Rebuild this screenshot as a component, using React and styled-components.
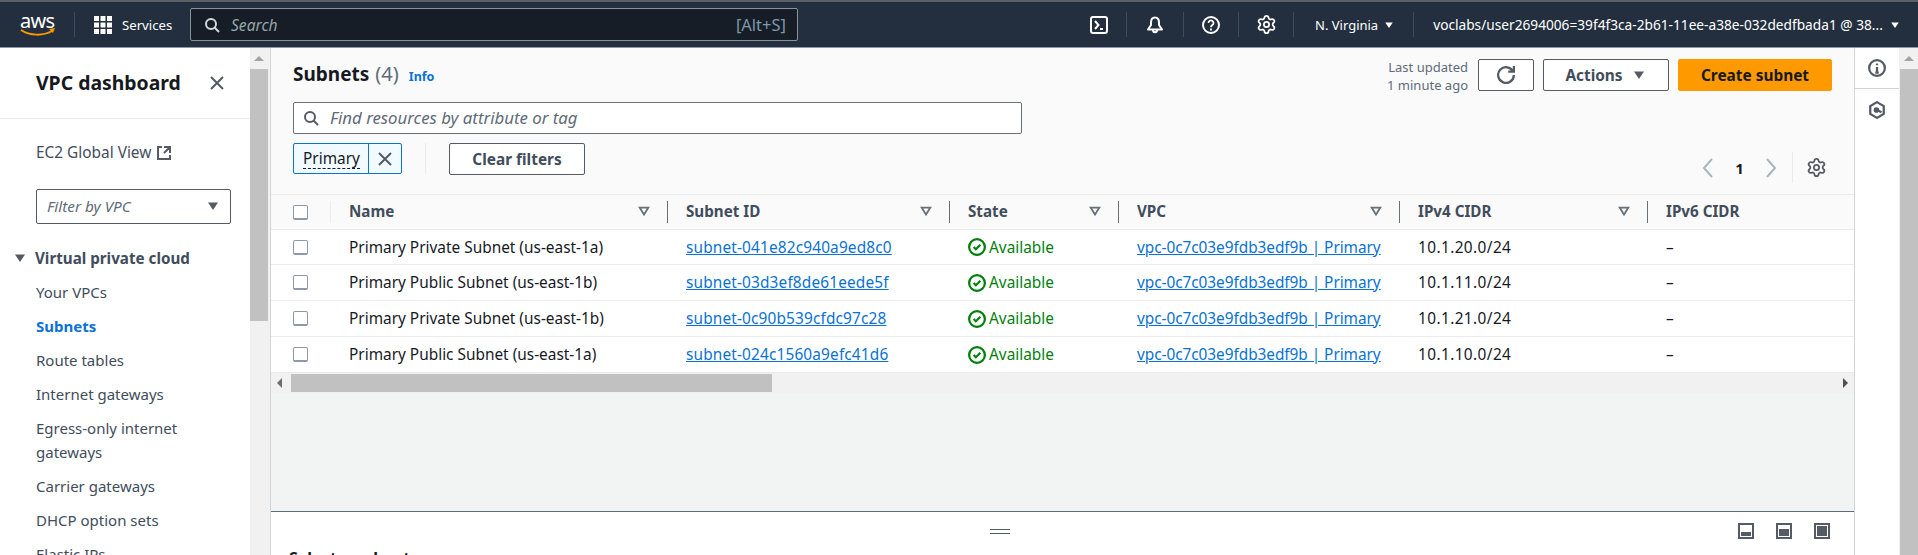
import styled, { createGlobalStyle } from 'styled-components';
import { Settings } from 'lucide-react';

const GlobalStyle = createGlobalStyle`
  html, body {
    margin: 0;
    padding: 0;
    background: #fff;
  }
  * {
    box-sizing: border-box;
  }
`;

const Page = styled.div`
  width: 1918px;
  height: 555px;
  display: flex;
  flex-direction: column;
  overflow: hidden;
  font-family: "Noto Sans", "Liberation Sans", sans-serif;
  font-size: 15.4px;
  color: #16191f;
`;

const TopBar = styled.header`
  height: 48px;
  flex: none;
  display: flex;
  align-items: center;
  background: #232f3e;
  border-top: 2px solid #5a5f66;
  border-bottom: 1px solid #8d99a8;
  color: #fff;
`;

const Logo = styled.svg`
  flex: none;
  margin-left: 20px;
  width: 36px;
  height: 24px;
  overflow: visible;
`;

const NavDivider = styled.span`
  flex: none;
  width: 1px;
  height: 25px;
  background: #414d5c;
  margin-left: ${({ $left }) => $left}px;
`;

const Services = styled.span`
  flex: none;
  width: 49px;
  margin-left: 10px;
  font-size: 13.2px;
  white-space: nowrap;
`;

const GridIcon = styled.svg`
  flex: none;
  width: 18px;
  height: 18px;
  margin-left: 19px;
  fill: #fff;
`;

const SearchBox = styled.div`
  flex: none;
  width: 608px;
  height: 33px;
  margin-left: 19px;
  display: flex;
  align-items: center;
  justify-content: space-between;
  padding: 0 11px 0 13px;
  background: #161d26;
  border: 1px solid #879596;
  border-radius: 2px;
`;

const SearchLabel = styled.span`
  display: flex;
  align-items: center;
  gap: 11px;
  font-size: 15.6px;
  font-style: italic;
  color: #95a5a6;
`;

const Shortcut = styled.span`
  color: #7d98ab;
  font-size: 16.5px;
`;

const NavIcon = styled.svg`
  flex: none;
  width: 18px;
  height: 18px;
  margin-left: ${({ $left }) => $left}px;
  fill: none;
  stroke: #fff;
  stroke-width: 2;
`;

const NavGear = styled(Settings)`
  flex: none;
  margin-left: 17px;
  color: #fff;
`;

const NavText = styled.span`
  flex: none;
  font-size: ${({ $size }) => $size}px;
  white-space: nowrap;
  margin-left: ${({ $left }) => $left}px;
`;

const Caret = styled.svg`
  flex: none;
  width: ${({ $size }) => $size || 16}px;
  height: ${({ $size }) => $size || 16}px;
  margin-left: ${({ $left }) => $left || 0}px;
  fill: ${({ $color }) => $color || '#545b64'};
`;

const Body = styled.div`
  flex: 1;
  min-height: 0;
  display: flex;
`;

const Sidebar = styled.aside`
  width: 250px;
  flex: none;
  overflow: hidden;
  background: #fff;
  color: #414d5c;
`;

const SidebarHead = styled.div`
  height: 71px;
  display: flex;
  align-items: center;
  justify-content: space-between;
  padding: 0 25px 1px 36px;
  border-bottom: 1px solid #e9ebed;
`;

const SidebarTitle = styled.h2`
  margin: 0;
  font-size: 19.4px;
  font-weight: 700;
  color: #16191f;
`;

const PlainIcon = styled.svg`
  flex: none;
  width: ${({ $size }) => $size || 16}px;
  height: ${({ $size }) => $size || 16}px;
  fill: none;
  stroke: ${({ $color }) => $color || '#545b64'};
  stroke-width: 2;
`;

const GlobalLink = styled.div`
  display: flex;
  align-items: center;
  gap: 5px;
  padding: 23px 0 0 36px;
  line-height: 22px;
`;

const VpcFilter = styled.div`
  width: 195px;
  height: 35px;
  margin: 25px 0 0 36px;
  display: flex;
  align-items: center;
  justify-content: space-between;
  padding: 0 9px 2px 10px;
  border: 1px solid #545b64;
  border-radius: 2px;
  font-size: 15.3px;
  font-style: italic;
  color: #5f6b7a;
`;

const NavGroup = styled.div`
  display: flex;
  align-items: center;
  gap: 7px;
  margin: 23px 0 0 12px;
  line-height: 22px;
  font-size: 15.2px;
  font-weight: 700;
`;

const NavList = styled.ul`
  list-style: none;
  margin: 5px 0 0;
  padding: 0 30px 0 36px;
`;

const NavItem = styled.li`
  padding: 6px 0;
  line-height: 24px;
  margin-bottom: -2px;
  font-size: 15px;
  color: ${({ $active }) => ($active ? '#0972d3' : '#414d5c')};
  font-weight: ${({ $active }) => ($active ? 700 : 400)};
`;

const VScroll = styled.div`
  width: ${({ $wide }) => ($wide ? 19 : 20)}px;
  flex: none;
  display: flex;
  flex-direction: column;
  align-items: ${({ $wide }) => ($wide ? 'flex-end' : 'flex-start')};
  background: #f1f1f1;
`;

const ScrollUp = styled.div`
  width: 18px;
  height: 21px;
  display: flex;
  align-items: center;
  justify-content: center;
  &::before {
    content: '';
    border-left: 5px solid transparent;
    border-right: 5px solid transparent;
    border-bottom: 5px solid #a3a3a3;
  }
`;

const ScrollThumb = styled.div`
  width: 18px;
  height: ${({ $height }) => $height}px;
  background: #c1c1c1;
`;

const Main = styled.main`
  flex: 1;
  min-width: 0;
  display: flex;
  flex-direction: column;
  border-left: 1px solid #d1d5db;
`;

const ListHeader = styled.section`
  flex: none;
  height: 146px;
  padding: 11px 22px 0 22px;
  background: #fafafa;
`;

const TitleRow = styled.div`
  height: 32px;
  display: flex;
  align-items: center;
  justify-content: space-between;
`;

const Title = styled.h1`
  margin: 0 0 4px;
  display: flex;
  align-items: baseline;
  font-size: 19px;
  font-weight: 700;
`;

const Count = styled.span`
  margin-left: 6px;
  font-size: 20px;
  font-weight: 400;
  color: #5f6b7a;
`;

const InfoLink = styled.a`
  margin-left: 10px;
  font-size: 12.5px;
  font-weight: 700;
  color: #0972d3;
`;

const Actions = styled.div`
  display: flex;
  align-items: center;
`;

const Updated = styled.div`
  text-align: right;
  font-size: 13px;
  line-height: 18px;
  color: #5f6b7a;
  margin: 1px 10px 0 0;
`;

const Button = styled.button`
  height: 32px;
  width: ${({ $width }) => $width}px;
  margin-left: ${({ $left }) => $left || 0}px;
  display: inline-flex;
  align-items: center;
  justify-content: center;
  gap: 8px;
  padding: 0;
  font: inherit;
  font-weight: 700;
  color: ${({ $primary }) => ($primary ? '#16191f' : '#414d5c')};
  background: ${({ $primary }) => ($primary ? '#ff9900' : '#fff')};
  border: 1px solid ${({ $primary }) => ($primary ? '#ff9900' : '#545b64')};
  border-radius: 2px;
`;

const FindInput = styled.div`
  width: 729px;
  height: 32px;
  margin-top: 11px;
  display: flex;
  align-items: center;
  gap: 11px;
  padding: 0 0 1px 9px;
  background: #fff;
  border: 1px solid #687078;
  border-radius: 2px;
  font-size: 16.8px;
  font-style: italic;
  color: #5f6b7a;
`;

const FilterRow = styled.div`
  height: 31px;
  margin-top: 9px;
  display: flex;
  align-items: stretch;
`;

const Token = styled.div`
  width: 109px;
  display: flex;
  background: #f1faff;
  border: 1px solid #0972d3;
  border-radius: 2px;
`;

const TokenLabel = styled.span`
  width: 75px;
  display: flex;
  align-items: center;
  padding-left: 9px;
  border-right: 1px solid #0972d3;
`;

const Dashed = styled.span`
  border-bottom: 1px dashed #16191f;
  line-height: 19px;
`;

const TokenClose = styled.span`
  flex: 1;
  display: flex;
  align-items: center;
  justify-content: center;
`;

const FilterDivider = styled.span`
  width: 1px;
  margin: 0 23px;
  background: #e9ebed;
`;

const Pager = styled.div`
  margin: 9px 0 0 auto;
  height: 31px;
  display: flex;
  align-items: center;
  padding-right: 5px;
  font-weight: 700;
`;

const PagerNumber = styled.span`
  width: 49px;
  text-align: center;
  font-size: 15px;
  color: #16191f;
`;

const PagerDivider = styled.span`
  width: 1px;
  height: 31px;
  margin: 0 13px 0 14px;
  background: #e9ebed;
`;

const ChevronIcon = styled.svg`
  flex: none;
  width: 14px;
  height: 20px;
  fill: none;
  stroke: #aab7b8;
  stroke-width: 2;
`;

const columns = '59px 337px 282px 169px 281px 248px 1fr';

const TableHead = styled.div`
  flex: none;
  display: grid;
  grid-template-columns: ${columns};
  height: 36px;
  align-items: center;
  background: #fafafa;
  border-top: 1px solid #e9ebed;
  border-bottom: 1px solid #e9ebed;
`;

const HeadCell = styled.div`
  height: 22px;
  display: flex;
  align-items: center;
  justify-content: space-between;
  padding: 0 16px 2px 18px;
  border-left: 1px solid ${({ $light }) => ($light ? '#e9ebed' : '#687078')};
  font-size: 15.2px;
  font-weight: 700;
  color: #414d5c;
`;

const CheckCell = styled.div`
  display: flex;
  align-items: center;
  padding-left: 22px;
`;

const CheckBox = styled.span`
  width: 15px;
  height: 15px;
  background: #fff;
  border: 1px solid #8d99a8;
  border-bottom-width: 2px;
  border-radius: 2px;
`;

const FilterIcon = styled.svg`
  flex: none;
  width: 14px;
  height: 14px;
  fill: none;
  stroke: #687078;
  stroke-width: 2;
`;

const Row = styled.div`
  flex: none;
  display: grid;
  grid-template-columns: ${columns};
  height: ${({ $height }) => $height}px;
  align-items: center;
  background: #fff;
  border-bottom: 1px solid #e9ebed;
`;

const Cell = styled.div`
  display: flex;
  align-items: center;
  padding-left: 19px;
  white-space: nowrap;
  letter-spacing: ${({ $spacing }) => $spacing || 0}px;
`;

const IdLink = styled.a`
  color: #0972d3;
  text-decoration: underline;
  letter-spacing: ${({ $spacing }) => $spacing}px;
`;

const Status = styled.span`
  display: flex;
  align-items: center;
  gap: 3px;
  color: #037f0c;
`;

const HScroll = styled.div`
  flex: none;
  height: 20px;
  display: flex;
  align-items: center;
  background: #f1f1f1;
  padding: 0 6px;
`;

const HThumb = styled.div`
  width: 481px;
  height: 18px;
  margin-left: 9px;
  background: #c1c1c1;
`;

const ArrowLeft = styled.span`
  border-top: 5px solid transparent;
  border-bottom: 5px solid transparent;
  border-right: 5px solid #6d6d6d;
`;

const ArrowRight = styled.span`
  margin-left: auto;
  border-top: 5px solid transparent;
  border-bottom: 5px solid transparent;
  border-left: 5px solid #505050;
`;

const EmptyArea = styled.div`
  flex: 1;
  background: #f2f3f3;
  border-bottom: 1px solid #5f6b7a;
`;

const SplitPanel = styled.section`
  flex: none;
  height: 43px;
  overflow: hidden;
  background: #fff;
`;

const SplitTools = styled.div`
  height: 38px;
  display: flex;
  align-items: center;
  padding: 0 24px 0 719px;
`;

const DragHandle = styled.span`
  width: 20px;
  height: 5px;
  border-top: 1px solid #545b64;
  border-bottom: 1px solid #545b64;
`;

const PanelIcons = styled.div`
  margin-left: auto;
  display: flex;
  gap: 22px;
`;

const PanelIcon = styled.svg`
  width: 16px;
  height: 16px;
  fill: #545b64;
`;

const SplitTitle = styled.h3`
  margin: 0;
  padding-left: 18px;
  font-size: 16px;
  line-height: 16px;
  font-weight: 700;
`;

const RightRail = styled.aside`
  width: 45px;
  flex: none;
  background: #fff;
  border-left: 1px solid #d1d5db;
`;

const RailButton = styled.div`
  height: ${({ $height }) => $height}px;
  display: flex;
  align-items: ${({ $top }) => ($top ? 'flex-start' : 'center')};
  justify-content: center;
  padding-top: ${({ $top }) => $top || 0}px;
  border-bottom: ${({ $line }) => ($line ? '1px solid #d1d5db' : 'none')};
`;

const GearIcon = styled(Settings)`
  flex: none;
  color: #545b64;
`;

const CaretIcon = (props) => (
  <Caret viewBox="0 0 16 16" {...props}>
    <path d="M3 4.5h10L8 12z" />
  </Caret>
);

const SearchIcon = ({ color }) => (
  <PlainIcon viewBox="0 0 16 16" $color={color}>
    <circle cx="7" cy="7" r="5" />
    <path d="M10.5 10.5 15 15" />
  </PlainIcon>
);

const CloseIcon = ({ size }) => (
  <PlainIcon viewBox="0 0 16 16" $size={size}>
    <path d="M2 2l12 12M14 2 2 14" />
  </PlainIcon>
);

const headers = [
  { label: 'Name', filter: true },
  { label: 'Subnet ID', filter: true },
  { label: 'State', filter: true },
  { label: 'VPC', filter: true },
  { label: 'IPv4 CIDR', filter: true },
  { label: 'IPv6 CIDR', filter: false }
];

const subnets = [
  { name: 'Primary Private Subnet (us-east-1a)', id: 'subnet-041e82c940a9ed8c0', cidr: '10.1.20.0/24' },
  { name: 'Primary Public Subnet (us-east-1b)', id: 'subnet-03d3ef8de61eede5f', cidr: '10.1.11.0/24' },
  { name: 'Primary Private Subnet (us-east-1b)', id: 'subnet-0c90b539cfdc97c28', cidr: '10.1.21.0/24' },
  { name: 'Primary Public Subnet (us-east-1a)', id: 'subnet-024c1560a9efc41d6', cidr: '10.1.10.0/24' }
];

const navItems = [
  { label: 'Your VPCs' },
  { label: 'Subnets', active: true },
  { label: 'Route tables' },
  { label: 'Internet gateways' },
  { label: 'Egress-only internet gateways' },
  { label: 'Carrier gateways' },
  { label: 'DHCP option sets' },
  { label: 'Elastic IPs' }
];

const App = () => (
  <Page>
    <GlobalStyle />
    <TopBar>
      <Logo viewBox="0 0 36 24">
        <text x="0" y="15" fontSize="20" fill="#fff" fontFamily="Noto Sans, sans-serif" textLength="35">aws</text>
        <path d="M1 17c9 6 22 6 31 1" fill="none" stroke="#ff9900" strokeWidth="2" />
        <path d="M29 16l6-1-2 5" fill="#ff9900" />
      </Logo>
      <NavDivider $left={18} />
      <GridIcon viewBox="0 0 18 18">
        {[0, 6.5, 13].map((y) =>
          [0, 6.5, 13].map((x) => <rect key={`${x}-${y}`} x={x} y={y} width="5" height="5" />)
        )}
      </GridIcon>
      <Services>Services</Services>
      <SearchBox>
        <SearchLabel>
          <SearchIcon color="#d5dbdb" />
          Search
        </SearchLabel>
        <Shortcut>[Alt+S]</Shortcut>
      </SearchBox>
      <NavIcon viewBox="0 0 18 18" $left={292}>
        <rect x="1" y="1" width="16" height="16" rx="2" />
        <path d="M5 5l3.5 4L5 13M10 13h3" />
      </NavIcon>
      <NavDivider $left={18} />
      <NavIcon viewBox="0 0 18 18" $left={19}>
        <path d="M9 1.5c-2.800 0-4 2.200-4 5v2.500L2 13.500h14L13 9V6.500c0-2.800-1.200-5-4-5z" strokeLinejoin="round" />
        <path d="M7 14c0 3 4 3 4 0" />
      </NavIcon>
      <NavDivider $left={19} />
      <NavIcon viewBox="0 0 18 18" $left={18}>
        <circle cx="9" cy="9" r="8" />
        <path d="M6.500 7a2.500 2.500 0 1 1 3.800 2.100c-.9.600-1.300 1.100-1.300 2.200M9 12.500v2" strokeWidth="1.800" />
      </NavIcon>
      <NavDivider $left={18} />
      <NavGear size={21} strokeWidth={2} />
      <NavDivider $left={16} />
      <NavText $left={21} $size={13}>N. Virginia</NavText>
      <CaretIcon $size={12} $left={5} $color="#fff" />
      <NavDivider $left={18} />
      <NavText $left={19} $size={13.7}>voclabs/user2694006=39f4f3ca-2b61-11ee-a38e-032dedfbada1 @ 38...</NavText>
      <CaretIcon $size={12} $left={6} $color="#fff" />
    </TopBar>
    <Body>
      <Sidebar>
        <SidebarHead>
          <SidebarTitle>VPC dashboard</SidebarTitle>
          <CloseIcon />
        </SidebarHead>
        <GlobalLink>
          EC2 Global View
          <PlainIcon viewBox="0 0 16 16">
            <path d="M14 8V2H8M14 2 8 8M6 2H2v12h12v-4" />
          </PlainIcon>
        </GlobalLink>
        <VpcFilter>
          Filter by VPC
          <CaretIcon />
        </VpcFilter>
        <NavGroup>
          <CaretIcon />
          Virtual private cloud
        </NavGroup>
        <NavList>
          {navItems.map((item) => (
            <NavItem key={item.label} $active={item.active}>{item.label}</NavItem>
          ))}
        </NavList>
      </Sidebar>
      <VScroll>
        <ScrollUp />
        <ScrollThumb $height={252} />
      </VScroll>
      <Main>
        <ListHeader>
          <TitleRow>
            <Title>
              Subnets<Count>(4)</Count><InfoLink>Info</InfoLink>
            </Title>
            <Actions>
              <Updated>Last updated<br />1 minute ago</Updated>
              <Button $width={56} aria-label="Refresh">
                <PlainIcon viewBox="0 0 16 16" $size={18}>
                  <path d="M10 5h5V0" />
                  <path d="M15 8a7 7 0 1 1-.7-3" />
                </PlainIcon>
              </Button>
              <Button $width={126} $left={9}>
                Actions
                <CaretIcon />
              </Button>
              <Button $width={154} $left={9} $primary>Create subnet</Button>
            </Actions>
          </TitleRow>
          <FindInput>
            <SearchIcon />
            Find resources by attribute or tag
          </FindInput>
          <FilterRow>
            <Token>
              <TokenLabel><Dashed>Primary</Dashed></TokenLabel>
              <TokenClose><CloseIcon /></TokenClose>
            </Token>
            <FilterDivider />
            <Button $width={136}>Clear filters</Button>
            <Pager>
              <ChevronIcon viewBox="0 0 14 20"><path d="M11 1 3 10l8 9" /></ChevronIcon>
              <PagerNumber>1</PagerNumber>
              <ChevronIcon viewBox="0 0 14 20"><path d="M3 1l8 9-8 9" /></ChevronIcon>
              <PagerDivider />
              <GearIcon size={21} strokeWidth={2} />
            </Pager>
          </FilterRow>
        </ListHeader>
        <TableHead>
          <CheckCell><CheckBox /></CheckCell>
          {headers.map((head, index) => (
            <HeadCell key={head.label} $light={index === 0}>
              {head.label}
              {head.filter && (
                <FilterIcon viewBox="0 0 16 16">
                  <path d="M3 4h10l-5 8z" />
                </FilterIcon>
              )}
            </HeadCell>
          ))}
        </TableHead>
        {subnets.map((subnet, index) => (
          <Row key={subnet.id} $height={index === 0 ? 35 : 36}>
            <CheckCell><CheckBox /></CheckCell>
            <Cell>{subnet.name}</Cell>
            <Cell><IdLink $spacing={0.15}>{subnet.id}</IdLink></Cell>
            <Cell>
              <Status>
                <PlainIcon viewBox="0 0 16 16" $size={18} $color="#037f0c">
                  <circle cx="8" cy="8" r="7" />
                  <path d="M5 8l2 2 4-4" />
                </PlainIcon>
                Available
              </Status>
            </Cell>
            <Cell><IdLink $spacing={-0.05}>vpc-0c7c03e9fdb3edf9b | Primary</IdLink></Cell>
            <Cell $spacing={0.4}>{subnet.cidr}</Cell>
            <Cell>–</Cell>
          </Row>
        ))}
        <HScroll>
          <ArrowLeft />
          <HThumb />
          <ArrowRight />
        </HScroll>
        <EmptyArea />
        <SplitPanel>
          <SplitTools>
            <DragHandle />
            <PanelIcons>
              <PanelIcon viewBox="0 0 16 16">
                <path fillRule="evenodd" d="M0 0h16v16H0zM2 2v12h12V2z" />
                <rect x="3" y="9" width="10" height="4" />
              </PanelIcon>
              <PanelIcon viewBox="0 0 16 16">
                <path fillRule="evenodd" d="M0 0h16v16H0zM2 2v12h12V2z" />
                <rect x="3" y="6" width="10" height="7" />
              </PanelIcon>
              <PanelIcon viewBox="0 0 16 16">
                <path fillRule="evenodd" d="M0 0h16v16H0zM2 2v12h12V2z" />
                <rect x="3" y="3" width="10" height="10" />
              </PanelIcon>
            </PanelIcons>
          </SplitTools>
          <SplitTitle>Select a subnet</SplitTitle>
        </SplitPanel>
      </Main>
      <RightRail>
        <RailButton $height={41} $line $top={11}>
          <PlainIcon viewBox="0 0 16 16" $size={18}>
            <circle cx="8" cy="8" r="7" />
            <path d="M8 7v5M6.500 12h3M8 4v1.500" />
          </PlainIcon>
        </RailButton>
        <RailButton $height={42}>
          <PlainIcon viewBox="0 0 16 16" $size={18}>
            <path d="M8 1l6 3.500v7L8 15l-6-3.500v-7z" />
            <circle cx="7.500" cy="8" r="1.500" fill="#545b64" />
            <path d="M8 8l4 2" />
          </PlainIcon>
        </RailButton>
      </RightRail>
      <VScroll $wide>
        <ScrollUp />
        <ScrollThumb $height={486} />
      </VScroll>
    </Body>
  </Page>
);

export default App;
